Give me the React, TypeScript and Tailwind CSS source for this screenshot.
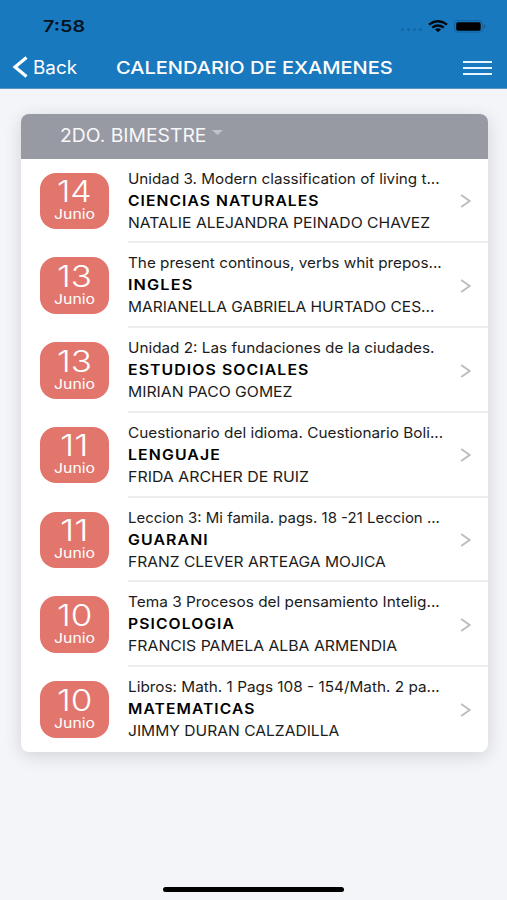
import { useLayoutEffect, useRef, useState } from "react";

// Text stretched horizontally so that it fills the given width.
function Wide({ width, className = "", children }: { width: number; className?: string; children: string }) {
  const ref = useRef<HTMLSpanElement>(null);
  const [scale, setScale] = useState(1);
  useLayoutEffect(() => {
    if (ref.current) setScale(width / ref.current.offsetWidth);
  }, [width, children]);
  return (
    <span
      ref={ref}
      className={`inline-block w-max origin-left whitespace-nowrap ${className}`}
      style={{ transform: `scaleX(${scale})` }}
    >
      {children}
    </span>
  );
}

type Exam = { day: string; topic: [string, number]; subject: [string, number]; teacher: [string, number] };

const exams: Exam[] = [
  { day: "14", topic: ["Unidad 3. Modern classification of living t...", 312], subject: ["CIENCIAS NATURALES", 192], teacher: ["NATALIE ALEJANDRA PEINADO CHAVEZ", 302] },
  { day: "13", topic: ["The present continous, verbs whit prepos...", 314], subject: ["INGLES", 65], teacher: ["MARIANELLA GABRIELA HURTADO CES...", 306] },
  { day: "13", topic: ["Unidad 2: Las fundaciones de la ciudades.", 306], subject: ["ESTUDIOS SOCIALES", 181], teacher: ["MIRIAN PACO GOMEZ", 165] },
  { day: "11", topic: ["Cuestionario del idioma. Cuestionario Boli...", 315], subject: ["LENGUAJE", 93], teacher: ["FRIDA ARCHER DE RUIZ", 181] },
  { day: "11", topic: ["Leccion 3: Mi famila. pags. 18 -21 Leccion ...", 312], subject: ["GUARANI", 81], teacher: ["FRANZ CLEVER ARTEAGA MOJICA", 258] },
  { day: "10", topic: ["Tema 3 Procesos del pensamiento Intelig...", 312], subject: ["PSICOLOGIA", 107], teacher: ["FRANCIS PAMELA ALBA ARMENDIA", 269] },
  { day: "10", topic: ["Libros: Math. 1 Pags 108 - 154/Math. 2 pa...", 312], subject: ["MATEMATICAS", 127], teacher: ["JIMMY DURAN CALZADILLA", 211] },
];

function StatusBar() {
  return (
    <div className="flex h-[50px] items-center pt-[2px] pr-[21px] pl-[43px]">
      <Wide width={42} className="text-[16px] leading-5 font-semibold text-[#051322]">7:58</Wide>
      <div className="ml-auto flex items-center">
        <div className="mt-[7px] mr-[6px] flex gap-[3px]">
          {[0, 1, 2, 3].map((i) => (
            <span key={i} className="size-[3px] rounded-full bg-[#1567a5]" />
          ))}
        </div>
        <svg className="h-[13px] w-5" viewBox="0 0 20 13" fill="none" stroke="#02080e" strokeWidth="2.4">
          <path d="M1 4.6Q10-2.2 19 4.6" />
          <path d="M4.2 7.6Q10 3.3 15.8 7.6" />
          <path d="M6.9 9.3Q10 7.1 13.1 9.3L10 12.3Z" fill="#02080e" stroke="none" />
        </svg>
        <svg className="ml-[6px] h-[13px] w-8" viewBox="0 0 32 13">
          <rect x=".6" y=".6" width="28" height="11.5" rx="3" fill="none" stroke="#12639f" strokeWidth="1" />
          <rect x="2.2" y="2.3" width="24.5" height="8.4" rx="1.6" fill="#000" />
          <path d="M30 4.5Q32.5 6.4 30 8.4Z" fill="#125589" />
        </svg>
      </div>
    </div>
  );
}

function ExamRow({ exam, last }: { exam: Exam; last: boolean }) {
  const dayWidth = exam.day === "11" ? 29 : 35;
  return (
    <div className="flex h-[84.8px] pl-[19px]">
      <div className="mt-[14px] flex h-[56.5px] w-[69px] shrink-0 flex-col items-center rounded-[16px] bg-[#e2766d] text-white">
        <div className="mt-[2.5px] flex" style={{ width: dayWidth }}>
          <Wide width={dayWidth} className="text-[30px] leading-[32px] font-light">{exam.day}</Wide>
        </div>
        <div className="-mt-[1px] flex w-[41px]">
          <Wide width={41} className="text-[13.5px] leading-[16px]">Junio</Wide>
        </div>
      </div>
      <div className={`ml-[19px] flex min-w-0 grow border-b-2 ${last ? "border-white" : "border-[#ededed]"}`}>
        <div className="flex w-[322px] flex-col items-start pt-[9px] text-[#1c1c1c]">
          <Wide width={exam.topic[1]} className="text-[14.5px] leading-[22px]">{exam.topic[0]}</Wide>
          <Wide width={exam.subject[1]} className="text-[14.5px] leading-[22px] font-semibold tracking-[1px] text-black">{exam.subject[0]}</Wide>
          <Wide width={exam.teacher[1]} className="text-[14.5px] leading-[22px]">{exam.teacher[0]}</Wide>
        </div>
        <svg className="mt-[35.5px] ml-[10px] h-[14px] w-[11px]" viewBox="0 0 11 14" fill="none" stroke="#bdbdbd" strokeWidth="1.9">
          <path d="M1.2 1L9.6 7L1.2 13" />
        </svg>
      </div>
    </div>
  );
}

export default function App() {
  return (
    <div className="flex h-[900px] w-[507px] flex-col overflow-hidden bg-[#f3f5f9] font-['Inter','Open_Sans',sans-serif]">
      <header className="h-[89px] shrink-0 border-b border-[#5a93bf] bg-[#1979be] text-white">
        <StatusBar />
        <div className="flex h-[34px] items-center pr-[15px] pl-[12px]">
          <svg className="h-[22px] w-[16px]" viewBox="0 0 16 22" fill="none" stroke="white" strokeWidth="3.2">
            <path d="M14.5 1.5L3 11L14.5 20.5" />
          </svg>
          <div className="ml-[5px] flex w-[83px] pt-[1px]">
            <Wide width={44} className="text-[18px] leading-6">Back</Wide>
          </div>
          <div className="flex w-[277px] pt-[1px]">
            <Wide width={277} className="text-[17.5px] leading-6 font-medium">CALENDARIO DE EXAMENES</Wide>
          </div>
          <div className="mt-[2px] ml-auto flex w-[29px] flex-col gap-[4px]">
            <span className="h-[2px] bg-[#e6f5ff]" />
            <span className="h-[2px] bg-[#e6f5ff]" />
            <span className="h-[2px] bg-[#e6f5ff]" />
          </div>
        </div>
      </header>
      <main className="grow pt-[24.5px] pr-[19px] pl-[20.6px]">
        <section className="overflow-hidden rounded-[8px] bg-white shadow-[0_4px_18px_rgba(0,0,0,0.14)]">
          <div className="flex h-[45px] items-center bg-[#989aa3] pl-[39px] text-[#f7f8fa]">
            <div className="flex w-[152.5px]">
              <Wide width={146} className="text-[18px] leading-6">2DO. BIMESTRE</Wide>
            </div>
            <svg className="-mt-[7px] h-[5px] w-[11px]" viewBox="0 0 11 5">
              <path d="M0 0H11L5.5 5Z" fill="#c0c2c9" />
            </svg>
          </div>
          {exams.map((exam, i) => (
            <ExamRow key={exam.subject[0]} exam={exam} last={i === exams.length - 1} />
          ))}
        </section>
      </main>
      <div className="mx-auto mb-[8px] h-[5px] w-[181px] shrink-0 rounded-full bg-black" />
    </div>
  );
}
